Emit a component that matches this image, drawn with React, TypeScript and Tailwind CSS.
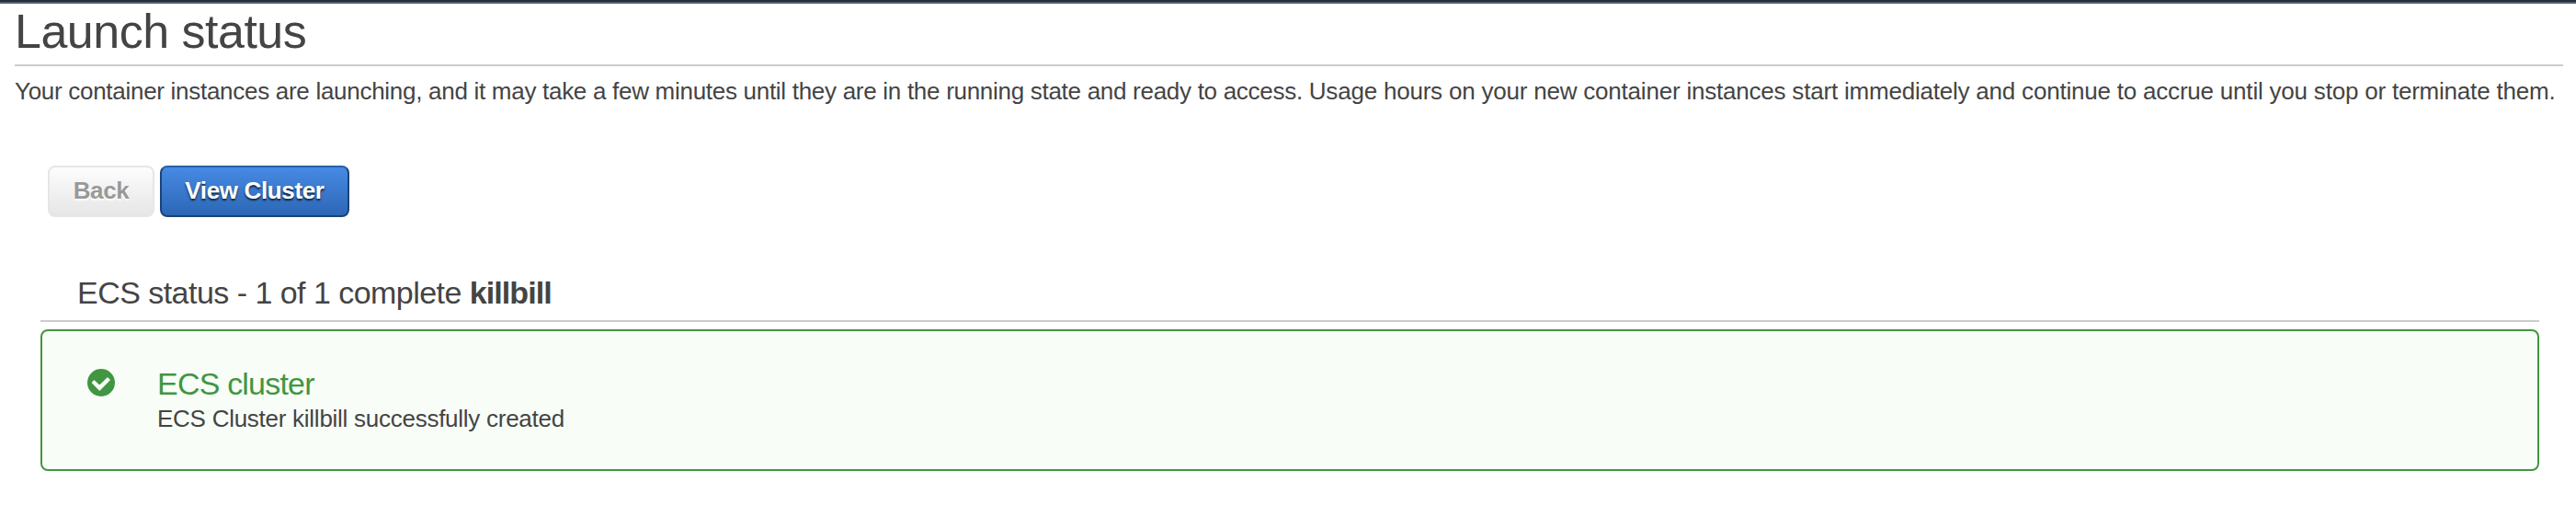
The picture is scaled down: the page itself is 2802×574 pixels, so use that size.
import React from "react";

function CheckCircle() {
  return (
    <svg viewBox="0 0 30 30" className="h-[30px] w-[30px] shrink-0" aria-hidden="true">
      <circle cx="15" cy="15" r="15" fill="#419641" />
      <path
        d="M5.5 15 L7.4 13.1 L13.3 18.6 L22 9.9 L24.1 11.9 L13.3 22.9 Z"
        fill="#f8fdf8"
        stroke="#f8fdf8"
        strokeWidth="1.4"
        strokeLinejoin="round"
      />
    </svg>
  );
}

export default function App() {
  return (
    <div className="h-[574px] w-full overflow-hidden bg-white font-['Liberation_Sans',Arial,sans-serif] whitespace-nowrap text-[#444444]">
      <div className="h-1 border-b-2 border-[#545b69] bg-[#232f3e]" />
      <main className="pr-[14px] pl-4">
        <h1 className="h-[68px] border-b-2 border-[#cccccc] text-[52px] leading-[60px] tracking-[-0.5px]">
          Launch status
        </h1>
        <p className="mt-3 text-[26px] leading-[30px]">
          <span className="tracking-[-0.288px]">
            Your container instances are launching, and it may take a few minutes until they are in
            the running state and ready to access.{" "}
          </span>
          <span className="tracking-[-0.208px]">
            Usage hours on your new container instances start immediately and continue to accrue
            until you stop or terminate them.
          </span>
        </p>
        <div className="mt-[66px] ml-9 flex gap-[6px] text-[26px] leading-[50px] font-bold">
          <button
            disabled
            className="h-14 w-[116px] rounded-lg border-2 border-[#e6e6e6] bg-linear-to-b from-[#fdfdfd] to-[#e6e6e6] pb-0.5 tracking-[-0.4px] text-[#999999] [text-shadow:0_2px_2px_#ffffff]"
          >
            Back
          </button>
          <button className="h-14 w-[206px] rounded-lg border-2 border-[#1b4375] border-t-[#2761aa] bg-linear-to-b from-[#478ae4] to-[#2d67b5] pb-0.5 tracking-[-0.36px] text-white [text-shadow:0_2px_2px_#0f2440]">
            View Cluster
          </button>
        </div>
        <section className="mt-[62px] mr-[26px] ml-7">
          <h2 className="h-[52px] border-b-2 border-[#cccccc] pl-10 text-[34px] leading-10 tracking-[-0.53px]">
            ECS status - 1 of 1 complete{" "}
            <strong className="tracking-[-0.94px]">killbill</strong>
          </h2>
          <div className="mt-2 flex h-[154px] rounded-lg border-2 border-[#419641] bg-[#f8fdf8] pt-[37px] pl-[49px]">
            <div className="pt-1">
              <CheckCircle />
            </div>
            <div className="ml-[46px]">
              <h3 className="text-[34px] leading-10 tracking-[-0.8px] text-[#419641]">
                ECS cluster
              </h3>
              <p className="mt-[3px] text-[26px] leading-[30px] tracking-[-0.263px]">
                ECS Cluster killbill successfully created
              </p>
            </div>
          </div>
        </section>
      </main>
    </div>
  );
}
